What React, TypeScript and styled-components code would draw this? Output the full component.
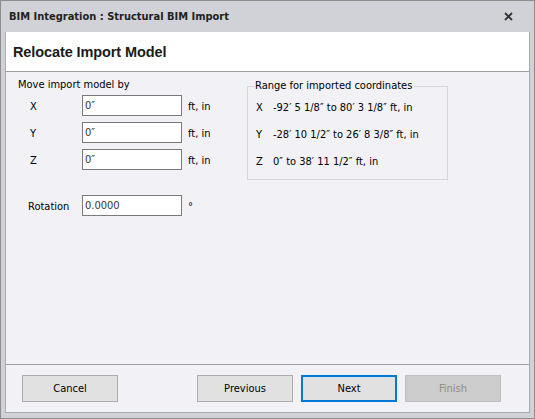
import React from "react";
import styled, { createGlobalStyle } from "styled-components";

const Global = createGlobalStyle`
  html, body { margin: 0; padding: 0; }
  body { width: 535px; height: 419px; overflow: hidden; background: #fff; }
  * { box-sizing: border-box; }
`;

const FONT = `"DejaVu Sans Condensed", "Liberation Sans", Arial, sans-serif`;

const Window = styled.div`
  width: 535px;
  height: 419px;
  border: 1px solid #8e8e8e;
  background: #d1d2d7;
  display: flex;
  flex-direction: column;
  font-family: ${FONT};
  font-size: 11px;
  color: #000;
`;

const TitleBar = styled.div`
  height: 31px;
  flex: none;
  display: flex;
  align-items: center;
  justify-content: space-between;
  padding: 0 21px 0 8px;
`;

const TitleText = styled.span`
  font-weight: bold;
  font-size: 11px;
  color: #222;
`;

const CloseButton = styled.button`
  border: 0;
  background: transparent;
  padding: 0;
  width: 10px;
  height: 10px;
  display: flex;
  align-items: center;
  justify-content: center;
`;

const Frame = styled.div`
  flex: 1;
  padding: 0 4px 5px 4px;
  display: flex;
`;

const Panel = styled.div`
  flex: 1;
  border: 1px solid #a9aab0;
  border-top: 0;
  background: #f1f1f6;
  display: flex;
  flex-direction: column;
`;

const Header = styled.div`
  height: 40px;
  background: #fff;
  border-bottom: 1px solid #a0a0a0;
  display: flex;
  align-items: center;
  padding-left: 7px;
  flex: none;
`;

const Heading = styled.h1`
  margin: 0;
  font-family: "Liberation Sans", Arial, sans-serif;
  font-size: 14.5px;
  font-weight: bold;
  letter-spacing: -0.1px;
  color: #1a1a1a;
`;

const Content = styled.div`
  flex: 1;
  display: flex;
  padding: 6px 0 0 12px;
`;

const LeftColumn = styled.div`
  width: 229px;
  display: flex;
  flex-direction: column;
`;

const SectionLabel = styled.div`
  height: 14px;
  line-height: 14px;
  margin-bottom: 3px;
`;

const FieldGrid = styled.div`
  display: grid;
  grid-template-columns: 52px 100px auto;
  row-gap: 6px;
  align-items: center;
  padding-left: 12px;
`;

const FieldLabel = styled.span<{ $indent?: number }>`
  margin-left: ${(p) => p.$indent ?? 0}px;
  padding-top: 2px;
`;

const Input = styled.input`
  width: 100px;
  height: 21px;
  border: 1px solid #7a7a7a;
  background: #fff;
  font-family: ${FONT};
  font-size: 11px;
  color: #333;
  padding: 0 2px;
  margin: 0;
  outline: none;
`;

const Unit = styled.span`
  padding-left: 6px;
  padding-top: 2px;
`;

const Spacer = styled.div`
  grid-column: 1 / -1;
  height: 13px;
`;

const GroupBox = styled.fieldset`
  margin: 0;
  margin-top: 1px;
  width: 201px;
  height: 101px;
  border: 1px solid #d6d6db;
  padding: 0 0 0 8px;
`;

const Legend = styled.legend`
  padding: 0 2px 0 0;
  margin-left: -1px;
  line-height: 14px;
`;

const RangeList = styled.div`
  display: flex;
  flex-direction: column;
  gap: 12px;
  padding-top: 7px;
`;

const RangeRow = styled.div`
  display: flex;
  line-height: 15px;
`;

const RangeAxis = styled.span`
  width: 17px;
  flex: none;
`;

const Footer = styled.div`
  height: 48px;
  flex: none;
  border-top: 1px solid #a0a0a0;
  display: flex;
  align-items: center;
  padding: 0 28px 0 16px;
`;

const Button = styled.button<{ $primary?: boolean }>`
  width: 96px;
  height: 27px;
  margin: 0;
  font-family: ${FONT};
  font-size: 11px;
  color: #000;
  background: #e1e1e1;
  border: 1px solid #adadad;
  padding: 0;
  ${(p) => (p.$primary ? "border: 2px solid #0078d7;" : "")}
  &:disabled {
    background: #cccccc;
    border-color: #bfbfbf;
    color: #8d8d8d;
  }
`;

const ButtonGroup = styled.div`
  margin-left: auto;
  display: flex;
  gap: 8px;
`;

const fields = [
  { axis: "X", value: "0″" },
  { axis: "Y", value: "0″" },
  { axis: "Z", value: "0″" },
];

const ranges = [
  { axis: "X", text: "-92′ 5 1/8″ to 80′ 3 1/8″ ft, in" },
  { axis: "Y", text: "-28′ 10 1/2″ to 26′ 8 3/8″ ft, in" },
  { axis: "Z", text: "0″ to 38′ 11 1/2″ ft, in" },
];

export default function App() {
  return (
    <>
      <Global />
      <Window>
        <TitleBar>
          <TitleText>BIM Integration : Structural BIM Import</TitleText>
          <CloseButton aria-label="Close">
            <svg width="9" height="9" viewBox="0 0 9 9">
              <path d="M1 1 L8 8 M8 1 L1 8" stroke="#333" strokeWidth="1.8" />
            </svg>
          </CloseButton>
        </TitleBar>
        <Frame>
          <Panel>
            <Header>
              <Heading>Relocate Import Model</Heading>
            </Header>
            <Content>
              <LeftColumn>
                <SectionLabel>Move import model by</SectionLabel>
                <FieldGrid>
                  {fields.map((f) => (
                    <React.Fragment key={f.axis}>
                      <FieldLabel>{f.axis}</FieldLabel>
                      <Input defaultValue={f.value} />
                      <Unit>ft, in</Unit>
                    </React.Fragment>
                  ))}
                  <Spacer />
                  <FieldLabel $indent={-2}>Rotation</FieldLabel>
                  <Input defaultValue="0.0000" />
                  <Unit>°</Unit>
                </FieldGrid>
              </LeftColumn>
              <GroupBox>
                <Legend>Range for imported coordinates</Legend>
                <RangeList>
                  {ranges.map((r) => (
                    <RangeRow key={r.axis}>
                      <RangeAxis>{r.axis}</RangeAxis>
                      <span>{r.text}</span>
                    </RangeRow>
                  ))}
                </RangeList>
              </GroupBox>
            </Content>
            <Footer>
              <Button>Cancel</Button>
              <ButtonGroup>
                <Button>Previous</Button>
                <Button $primary>Next</Button>
                <Button disabled>Finish</Button>
              </ButtonGroup>
            </Footer>
          </Panel>
        </Frame>
      </Window>
    </>
  );
}
